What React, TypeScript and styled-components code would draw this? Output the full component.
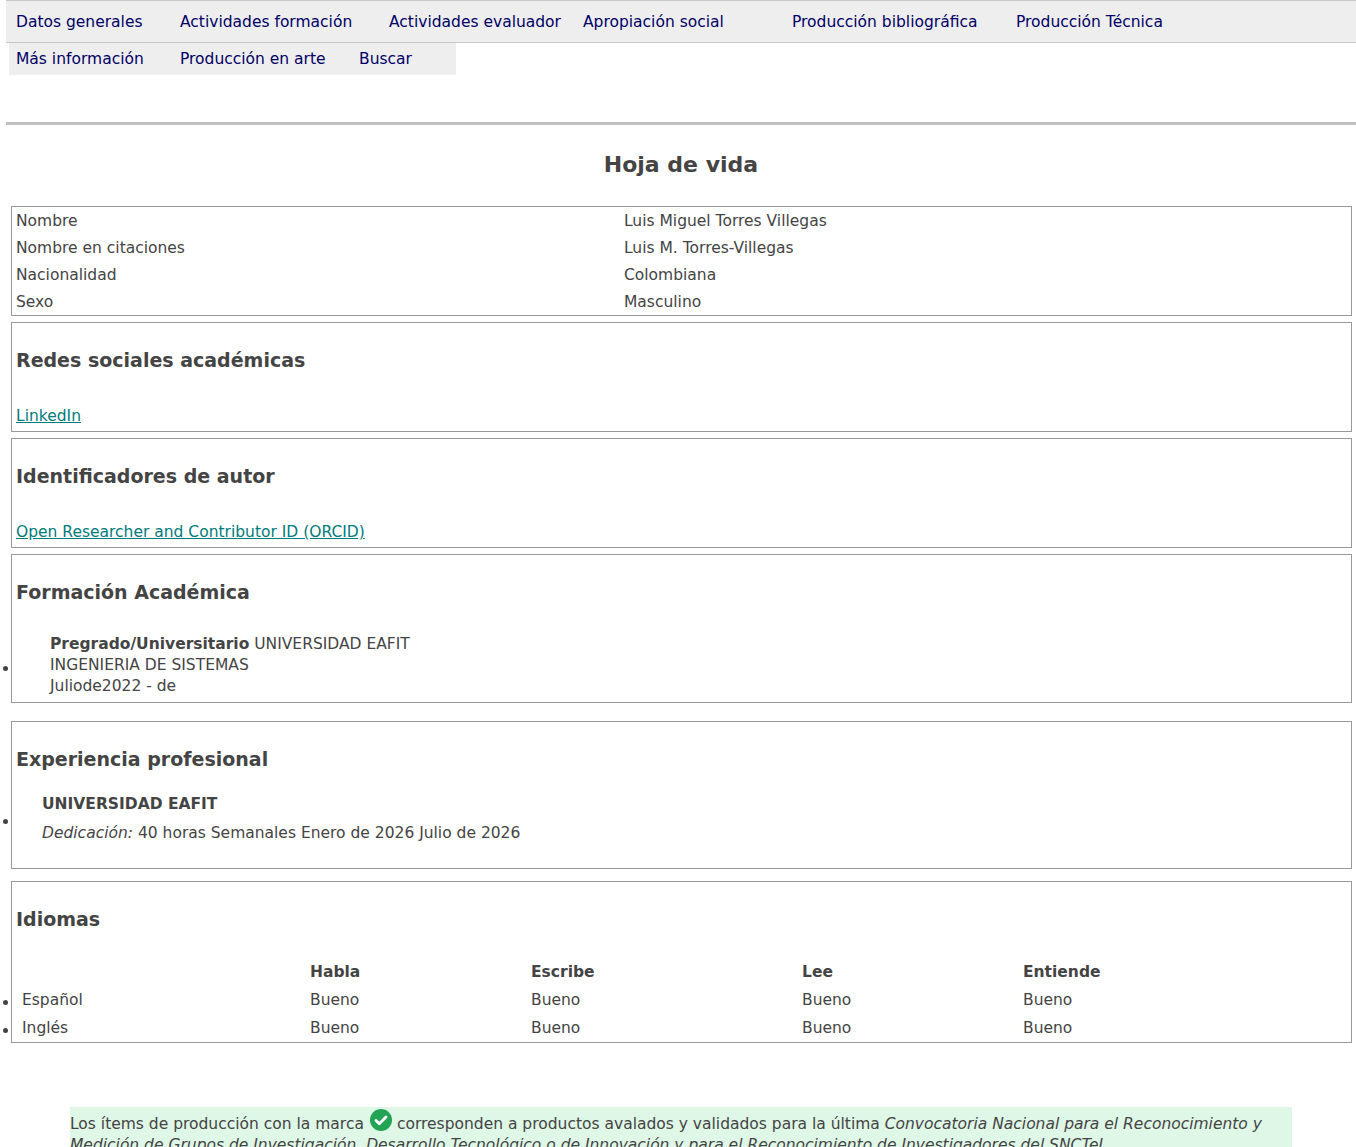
import React from 'react';
import styled, { createGlobalStyle } from 'styled-components';

const Global = createGlobalStyle`
  body { margin: 0; font-family: "DejaVu Sans", sans-serif; font-size: 15.5px; color: #444; background: #fff; }
`;

const Page = styled.div`
  padding: 0 0 0 6px;
`;

const Nav = styled.div`
  border-top: 1px solid #c8c8c8;
`;

const NavRow = styled.div<{ $first?: boolean }>`
  display: flex;
  background: #eee;
  height: ${p => (p.$first ? '41px' : '32px')};
  align-items: center;
  border-bottom: ${p => (p.$first ? '1px solid #c8c8c8' : 'none')};
  width: ${p => (p.$first ? 'auto' : '440px')};
  margin-left: ${p => (p.$first ? '0' : '3px')};
  padding-left: ${p => (p.$first ? '10px' : '7px')};
`;

const NavItem = styled.a<{ $w: number }>`
  width: ${p => p.$w}px;
  color: #000066;
  text-decoration: none;
  white-space: nowrap;
`;

const Rule = styled.div`
  height: 3px;
  background: #c0c0c0;
  margin-top: 47px;
`;

const Title = styled.h2`
  text-align: center;
  font-size: 22px;
  margin: 27px 0 29px;
  color: #444;
`;

const Box = styled.div<{ $gap?: number }>`
  border: 1px solid #999;
  margin: 0 4px ${p => p.$gap ?? 6}px 5px;
  padding: 0 4px;
  position: relative;
`;

const DataRow = styled.div`
  display: grid;
  grid-template-columns: 608px 1fr;
  height: 27px;
  align-items: center;
`;

const Heading = styled.h3<{ $after?: number }>`
  font-size: 19px;
  margin: 0;
  padding: 26px 0 ${p => p.$after ?? 36}px;
`;

const Link = styled.a`
  display: block;
  color: #007b7b;
  text-decoration: underline;
  padding-bottom: 6px;
`;

const Item = styled.div<{ $indent: number; $lh: number; $after: number }>`
  padding-left: ${p => p.$indent}px;
  line-height: ${p => p.$lh}px;
  padding-bottom: ${p => p.$after}px;
  position: relative;
  &::before {
    content: '';
    position: absolute;
    left: -13px;
    top: calc(50% - ${p => p.$after / 2}px);
    width: 5px;
    height: 5px;
    border-radius: 50%;
    background: #444;
  }
`;

const LangRow = styled.div<{ $head?: boolean }>`
  display: grid;
  grid-template-columns: 288px 221px 271px 221px 1fr;
  padding-left: 6px;
  height: 28px;
  align-items: center;
  font-weight: ${p => (p.$head ? 'bold' : 'normal')};
  position: relative;
  &::before {
    content: '';
    display: ${p => (p.$head ? 'none' : 'block')};
    position: absolute;
    left: -13px;
    top: 14px;
    width: 5px;
    height: 5px;
    border-radius: 50%;
    background: #444;
  }
`;

const Note = styled.div`
  margin: 64px 64px 0 64px;
  background: #dff7e6;
  padding: 2px 0 0;
  line-height: 21px;
`;

const Check = () => (
  <svg width="22" height="22" viewBox="0 0 22 22" style={{ verticalAlign: '-2px', margin: '0 5px 0 6px' }}>
    <circle cx="11" cy="11" r="11" fill="#22a454" />
    <path d="M6 11.5l3.3 3.3L16 8" stroke="#fff" strokeWidth="2.8" fill="none" strokeLinecap="round" strokeLinejoin="round" />
  </svg>
);

const nav1: [string, number][] = [
  ['Datos generales', 164], ['Actividades formación', 209], ['Actividades evaluador', 194],
  ['Apropiación social', 209], ['Producción bibliográfica', 224], ['Producción Técnica', 200],
];
const nav2: [string, number][] = [['Más información', 164], ['Producción en arte', 179], ['Buscar', 80]];

const datos = [
  ['Nombre', 'Luis Miguel Torres Villegas'],
  ['Nombre en citaciones', 'Luis M. Torres-Villegas'],
  ['Nacionalidad', 'Colombiana'],
  ['Sexo', 'Masculino'],
];

export default function App() {
  return (
    <Page>
      <Global />
      <Nav>
        <NavRow $first>{nav1.map(([t, w]) => <NavItem key={t} $w={w}>{t}</NavItem>)}</NavRow>
        <NavRow>{nav2.map(([t, w]) => <NavItem key={t} $w={w}>{t}</NavItem>)}</NavRow>
      </Nav>
      <Rule />
      <Title>Hoja de vida</Title>
      <Box>
        {datos.map(([k, v]) => (
          <DataRow key={k}><span>{k}</span><span>{v}</span></DataRow>
        ))}
      </Box>
      <Box>
        <Heading>Redes sociales académicas</Heading>
        <Link>LinkedIn</Link>
      </Box>
      <Box>
        <Heading>Identificadores de autor</Heading>
        <Link>Open Researcher and Contributor ID (ORCID)</Link>
      </Box>
      <Box $gap={18}>
        <Heading $after={31}>Formación Académica</Heading>
        <Item $indent={34} $lh={21} $after={5}>
          <b>Pregrado/Universitario</b> UNIVERSIDAD EAFIT<br />INGENIERIA DE SISTEMAS<br />Juliode2022 - de
        </Item>
      </Box>
      <Box $gap={12}>
        <Heading $after={20}>Experiencia profesional</Heading>
        <Item $indent={26} $lh={29} $after={20}>
          <b>UNIVERSIDAD EAFIT</b><br /><i>Dedicación:</i> 40 horas Semanales Enero de 2026 Julio de 2026
        </Item>
      </Box>
      <Box>
        <Heading $after={28}>Idiomas</Heading>
        <LangRow $head><span /><span>Habla</span><span>Escribe</span><span>Lee</span><span>Entiende</span></LangRow>
        <LangRow><span>Español</span><span>Bueno</span><span>Bueno</span><span>Bueno</span><span>Bueno</span></LangRow>
        <LangRow><span>Inglés</span><span>Bueno</span><span>Bueno</span><span>Bueno</span><span>Bueno</span></LangRow>
      </Box>
      <Note>
        Los ítems de producción con la marca<Check />corresponden a productos avalados y validados para la última{' '}
        <i>Convocatoria Nacional para el Reconocimiento y Medición de Grupos de Investigación, Desarrollo Tecnológico o de Innovación y para el Reconocimiento de Investigadores del SNCTeI</i>
      </Note>
    </Page>
  );
}
